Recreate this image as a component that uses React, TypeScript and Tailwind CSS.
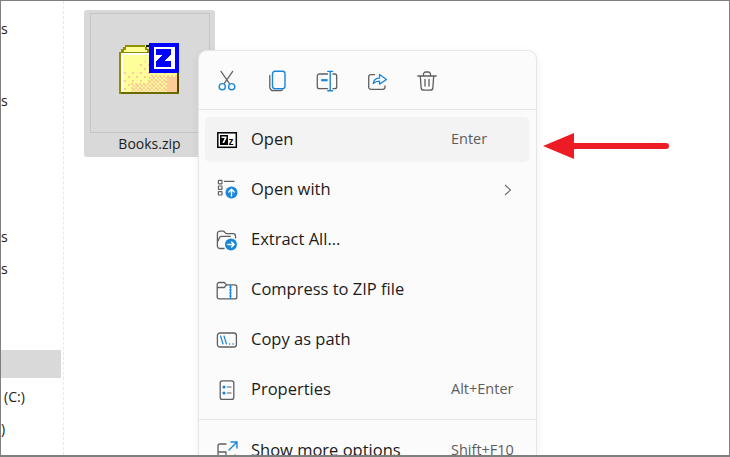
const BLUE = '#1a86d9'
const GRAY = '#5f5f5f'

function Icon({ children }: { children: React.ReactNode }) {
  return (
    <svg width="24" height="24" viewBox="0 0 24 24" fill="none" strokeWidth="1.2" strokeLinecap="round" strokeLinejoin="round" className="shrink-0">
      {children}
    </svg>
  )
}

function FolderZip() {
  return (
    <svg width="60" height="52" viewBox="0 0 60 52" shapeRendering="crispEdges">
      <defs>
        <pattern id="sparse" width="8" height="8" patternUnits="userSpaceOnUse">
          <rect x="1" y="1" width="2" height="2" fill="#ffcc99" />
          <rect x="5" y="5" width="2" height="2" fill="#ffcc99" />
        </pattern>
        <pattern id="dense" width="4" height="4" patternUnits="userSpaceOnUse">
          <rect x="0" y="0" width="2" height="2" fill="#ffcc99" />
          <rect x="2" y="2" width="2" height="2" fill="#ffcc99" />
        </pattern>
      </defs>
      <path d="M0 9h2V6h2V4h2V2h20v2h2v2h2v4h30v41H0z" fill="#8f8f00" />
      <path d="M7 4h19v3h2v2H5V7h2z" fill="#ffff99" />
      <rect x="2" y="10" width="56" height="39" fill="#ffff99" />
      <rect x="2" y="10" width="56" height="2" fill="#ffffff" />
      <rect x="2" y="10" width="2" height="39" fill="#ffffff" />
      <rect x="4" y="28" width="54" height="21" fill="url(#sparse)" />
      <rect x="20" y="18" width="38" height="14" fill="url(#sparse)" />
      <rect x="12" y="40" width="46" height="9" fill="url(#dense)" />
      <rect x="30" y="32" width="28" height="17" fill="url(#dense)" />
      <rect x="48" y="34" width="10" height="15" fill="#ffcc99" />
      <rect x="27" y="2" width="3" height="2" fill="#1a1a00" />
      <rect x="58" y="10" width="2" height="41" fill="#4a4a00" />
      <rect x="2" y="49" width="58" height="2" fill="#6a6a00" />
      <rect x="30" width="30" height="30" fill="#0000ff" />
      <rect x="35" y="4" width="21" height="22" fill="#ffffff" />
      <path d="M37 6h15v6l-7 6h7v6H37v-6l7-6h-7z" fill="#0000ff" />
    </svg>
  )
}

function Cut() {
  return (
    <Icon>
      <path d="M6 3.3 14.3 15.3M17.7 3.3 9.3 15.3" stroke={GRAY} />
      <circle cx="7.3" cy="18.7" r="3.1" stroke={BLUE} strokeWidth="1.4" />
      <circle cx="16.7" cy="18.7" r="3.1" stroke={BLUE} strokeWidth="1.4" />
    </Icon>
  )
}

function Copy() {
  return (
    <Icon>
      <path d="M4.8 7.5v11.7a3.5 3.5 0 0 0 3.5 3.5h7.5a2 2 0 0 0 1.7-1" stroke={GRAY} strokeWidth="1.3" />
      <rect x="7.5" y="3.3" width="12.5" height="17.4" rx="2.4" stroke={BLUE} strokeWidth="1.4" />
    </Icon>
  )
}

function Rename() {
  return (
    <Icon>
      <path d="M12.5 6H4.3a2 2 0 0 0-2 2v10.7a2 2 0 0 0 2 2h8.2M18 6h1.7a2 2 0 0 1 2 2v10.7a2 2 0 0 1-2 2H18" stroke={GRAY} strokeWidth="1.3" />
      <path d="M6.2 12.2h6.4" stroke={BLUE} strokeWidth="2.2" strokeLinecap="butt" />
      <path d="M15.2 3.8v18.6M12.8 3.4h4.8M12.8 22.7h4.8" stroke={BLUE} strokeWidth="1.4" />
    </Icon>
  )
}

function Share() {
  return (
    <Icon>
      <path d="M9.5 6.7H6a2.3 2.3 0 0 0-2.3 2.3v10a2.3 2.3 0 0 0 2.3 2.3h11.7a2.3 2.3 0 0 0 2.3-2.3v-1" stroke={GRAY} strokeWidth="1.3" />
      <path d="M8.3 15.5c.3-3 2.6-5.3 6.2-5.3V6.5l7 5-7 4.6v-3c-2.4 0-4.6.7-6.2 2.4z" stroke={BLUE} strokeWidth="1.3" />
    </Icon>
  )
}

function Trash() {
  return (
    <Icon>
      <path d="M2.8 8h18.4M8.5 8V6.2a2.2 2.2 0 0 1 2.2-2.2h2.6a2.2 2.2 0 0 1 2.2 2.2V8M5.3 8l.8 11.6a2.8 2.8 0 0 0 2.8 2.6h6.2a2.8 2.8 0 0 0 2.8-2.6L18.7 8M10 11.5v6.5M14 11.5v6.5" stroke={GRAY} strokeWidth="1.3" />
    </Icon>
  )
}

function SevenZip() {
  return (
    <svg width="24" height="24" viewBox="0 0 24 24" className="shrink-0">
      <rect x="2.8" y="4.8" width="18.5" height="14.5" fill="#ffffff" stroke="#000000" strokeWidth="1.5" />
      <rect x="5" y="7" width="8" height="10" fill="#000000" />
      <path d="M6.5 8.5h5v1.6l-2.4 5H7.4l2.3-5H6.5z" fill="#ffffff" />
      <text x="13.6" y="17" fontSize="10" fontWeight="700" fontFamily="'Liberation Sans', sans-serif" fill="#000000">z</text>
    </svg>
  )
}

function OpenWith() {
  return (
    <Icon>
      <path d="M9.5 3.4h9.5" stroke={GRAY} />
      <rect x="3.4" y="2.4" width="3.6" height="3.4" rx=".6" stroke={GRAY} />
      <rect x="3.4" y="8" width="3.6" height="3.4" rx=".6" stroke={GRAY} />
      <rect x="3.4" y="13.6" width="3.6" height="3.4" rx=".6" stroke={GRAY} />
      <circle cx="16.5" cy="14.5" r="6" fill={BLUE} />
      <path d="M16.5 18v-6.5M13.8 14l2.7-2.7 2.7 2.7" stroke="#ffffff" strokeWidth="1.4" />
    </Icon>
  )
}

function Extract() {
  return (
    <Icon>
      <path d="M9 20.5H5a2.6 2.6 0 0 1-2.6-2.6V5.5A2.3 2.3 0 0 1 4.7 3.2h4l2.5 2.4h7a2.3 2.3 0 0 1 2.3 2.3v2M3 13l1.5-3.5a2 2 0 0 1 1.8-1.2h9" stroke={GRAY} strokeWidth="1.3" />
      <circle cx="16" cy="16.5" r="6" fill={BLUE} />
      <path d="M12.8 16.5h6.2M16.6 13.9l2.6 2.6-2.6 2.6" stroke="#ffffff" strokeWidth="1.4" />
    </Icon>
  )
}

function Compress() {
  return (
    <Icon>
      <path d="M4.2 4.5h5l2.4 2.4h8.2a2 2 0 0 1 2 2v10a2 2 0 0 1-2 2H4.2a2 2 0 0 1-2-2V6.5a2 2 0 0 1 2-2zM2.2 9.5h7l2.4-2.6" stroke={GRAY} strokeWidth="1.3" />
      <path d="M15.5 7v14" stroke={BLUE} strokeWidth="1.3" strokeLinecap="butt" />
      <path d="M14.2 9h2.4M14.2 12h2.4M14.2 15h2.4M14.2 18h2.4" stroke={BLUE} strokeWidth="1" strokeLinecap="butt" />
    </Icon>
  )
}

function CopyPath() {
  return (
    <Icon>
      <rect x="2.4" y="5" width="19" height="14" rx="2.6" stroke={GRAY} strokeWidth="1.3" />
      <path d="M5.6 8l2.4 8M9 8l2.4 8" stroke={BLUE} strokeWidth="1.2" />
      <path d="M14.6 16h.1M18 16h.1" stroke={BLUE} strokeWidth="1.5" />
    </Icon>
  )
}

function Properties() {
  return (
    <Icon>
      <rect x="5.2" y="2.8" width="13.6" height="18.6" rx="2.2" stroke={GRAY} strokeWidth="1.3" />
      <circle cx="9" cy="9" r="1.6" fill={BLUE} />
      <circle cx="9" cy="15" r="1.6" fill={BLUE} />
      <path d="M12.4 9h3.6M12.4 15h3.6" stroke={GRAY} />
    </Icon>
  )
}

function ShowMore() {
  return (
    <Icon>
      <path d="M11 5H5a2 2 0 0 0-2 2v14a2 2 0 0 0 2 2h13a2 2 0 0 0 2-2v-5M3 13h8v10" stroke={GRAY} strokeWidth="1.3" />
      <path d="M14 11l7.5-7.5M16 3h6v6" stroke={BLUE} strokeWidth="1.4" />
    </Icon>
  )
}

function Row({ icon, label, hint, active, more }: { icon: React.ReactNode; label: string; hint?: string; active?: boolean; more?: boolean }) {
  return (
    <div className={`flex h-[45px] items-center gap-3 rounded-[5px] pl-[10px] ${active ? 'bg-[#f3f3f3]' : ''}`}>
      {icon}
      <span className="w-[188px] shrink-0 pb-[1px] text-[16.5px] whitespace-nowrap text-[#1b1b1b]">{label}</span>
      {hint && <span className="pb-[2px] text-[14.5px] whitespace-nowrap text-[#5d5d5d]">{hint}</span>}
      {more && (
        <svg width="10" height="14" viewBox="0 0 10 14" fill="none" className="ml-[52px]">
          <path d="M2 2l5.5 5L2 12" stroke="#6b6b6b" strokeWidth="1.1" />
        </svg>
      )}
    </div>
  )
}

export default function App() {
  return (
    <div className="relative flex h-[457px] w-[730px] overflow-hidden border border-b-2 border-[#7f7f7f] bg-white font-['Open_Sans','Liberation_Sans',sans-serif] text-[14px] text-[#1b1b1b]">
      {/* sidebar, scrolled to the right so only the ends of the names show */}
      <div className="h-full w-[63px] shrink-0 border-r border-dashed border-[#e8e8e8] pt-[11px]">
        <div className="flex h-8 items-center">s</div>
        <div className="mt-10 flex h-8 items-center">s</div>
        <div className="mt-[104px] flex h-8 items-center">s</div>
        <div className="flex h-8 items-center">s</div>
        <div className="mt-[66px] mr-[2px] h-7 bg-[#d9d9d9]" />
        <div className="mt-[2px] flex h-8 items-center pl-[3px]">(C:)</div>
        <div className="flex h-8 items-center">)</div>
      </div>

      <div className="pt-[9px] pl-5">
        <div className="flex h-[147px] w-[131px] flex-col items-center rounded-[3px] bg-[#d9d9d9] px-[5px] pt-[3px]">
          <div className="flex h-[120px] w-[120px] items-center justify-center border border-[#c6c6c6] pr-[1px] pb-[9px]">
            <FolderZip />
          </div>
          <div className="leading-[22px]">Books.zip</div>
        </div>
      </div>

      {/* context menu */}
      <div className="absolute top-[49px] left-[197px] h-[460px] w-[339px] rounded-[9px] border border-[#e6e6e6] bg-[#fbfbfb] shadow-[0_2px_8px_rgba(0,0,0,0.06)]">
        <div className="flex h-[59px] items-center gap-[26px] border-b border-[#e5e5e5] pl-[16px]">
          <Cut />
          <Copy />
          <Rename />
          <Share />
          <Trash />
        </div>
        <div className="flex flex-col gap-[5px] pt-[7px] pr-[7px] pl-[6px]">
          <Row active icon={<SevenZip />} label="Open" hint="Enter" />
          <Row icon={<OpenWith />} label="Open with" more />
          <Row icon={<Extract />} label="Extract All..." />
          <Row icon={<Compress />} label="Compress to ZIP file" />
          <Row icon={<CopyPath />} label="Copy as path" />
          <Row icon={<Properties />} label="Properties" hint="Alt+Enter" />
        </div>
        <div className="mt-[7px] border-t border-[#e5e5e5]" />
        <div className="px-[6px] pt-[8px]">
          <Row icon={<ShowMore />} label="Show more options" hint="Shift+F10" />
        </div>
      </div>

      {/* red annotation arrow */}
      <svg width="130" height="30" viewBox="0 0 130 30" className="absolute top-[130px] left-[540px]">
        <path d="M2 15 33 2v10h92a3 3 0 0 1 0 6H33v10z" fill="#ed1c24" />
      </svg>
    </div>
  )
}
